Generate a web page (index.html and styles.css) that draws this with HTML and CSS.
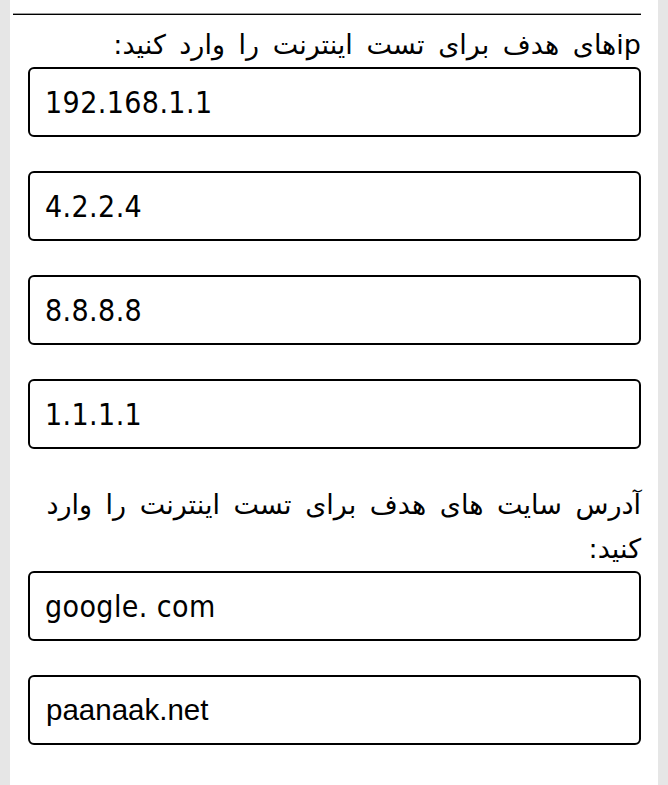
FILE: index.html
```html
<!DOCTYPE html>
<html lang="fa">
<head>
<meta charset="utf-8">
<title>تست اینترنت</title>
<link rel="stylesheet" href="styles.css">
</head>
<body>
<div class="panel">
  <hr class="sep">
  <div class="label">ipهای هدف برای تست اینترنت را وارد کنید:</div>
  <input class="field ip" type="text" value="192.168.1.1">
  <input class="field ip" type="text" value="4.2.2.4">
  <input class="field ip" type="text" value="8.8.8.8">
  <input class="field ip" type="text" value="1.1.1.1">
  <div class="label">آدرس سایت های هدف برای تست اینترنت را وارد کنید:</div>
  <input class="field ip" type="text" value="google. com">
  <input class="field site" type="text" value="paanaak.net">
</div>
</body>
</html>
```

FILE: styles.css
```css
html, body {
  margin: 0;
  padding: 0;
}
body {
  background: #e6e6e6;
}
.panel {
  margin: 0 10px;
  background: #fff;
  min-height: 785px;
  box-sizing: border-box;
  padding: 13px 17px 1px 3px;
  direction: rtl;
}
.sep {
  height: 0;
  margin: 0 0 8px 0;
  border: 0;
  border-top: 1px solid #9a9a9a;
  border-bottom: 1px solid #000;
}
.label {
  font-family: "DejaVu Sans", sans-serif;
  font-size: 27px;
  line-height: 44px;
  word-spacing: 5px;
  color: #000;
  text-align: right;
}
.field {
  display: block;
  direction: ltr;
  box-sizing: border-box;
  width: 613px;
  height: 70px;
  margin: 0 0 34px 0;
  padding: 0 14px 0 15px;
  border: 2px solid #000;
  border-radius: 6px;
  background: #fff;
  color: #000;
  outline: none;
}
.ip {
  font-family: "DejaVu Sans", sans-serif;
  font-size: 30px;
  font-stretch: condensed;
  letter-spacing: 0.4px;
}
.site {
  font-family: "Liberation Sans", Arial, sans-serif;
  font-size: 29.5px;
  padding-left: 16px;
}
```
